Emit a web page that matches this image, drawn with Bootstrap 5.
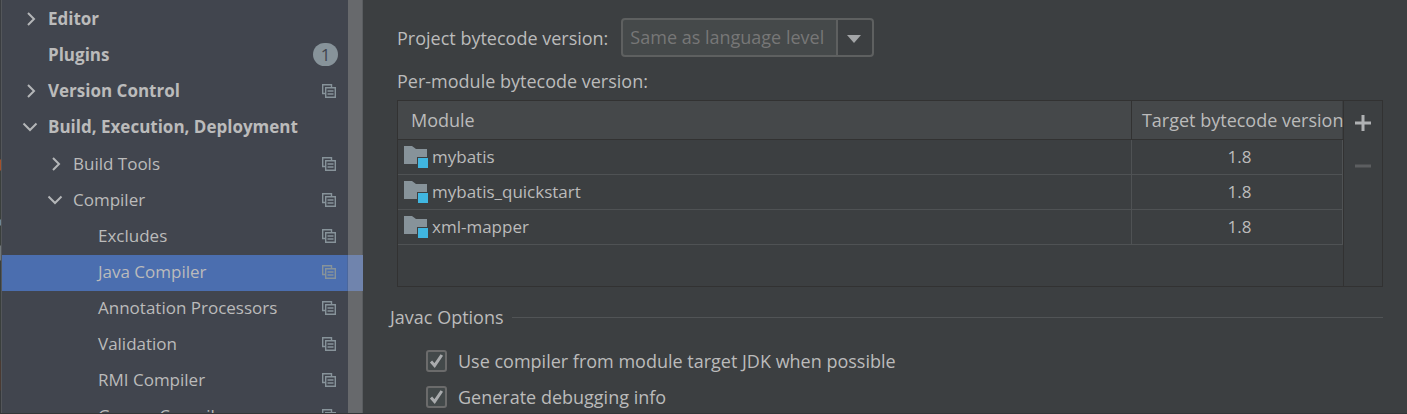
<!DOCTYPE html>
<html lang="en">
<head>
<meta charset="utf-8">
<meta name="viewport" content="width=device-width, initial-scale=1">
<title>Settings - Java Compiler</title>
<link href="https://cdn.jsdelivr.net/npm/bootstrap@5.3.0/dist/css/bootstrap.min.css" rel="stylesheet">
<style>
  :root { --pane: #3c3f41; --tree: #41454e; --ink: #bbbbbb; --edge: #323232; --grid: #4f5254; }
  body { background: var(--pane); color: var(--ink); font-family: "Open Sans", "Noto Sans", sans-serif; font-size: 18px; line-height: 24px; }
  .settings { border-bottom: 1px solid #333638; }

  /* category tree */
  .backdrop { width: 2px; border-right: 1px solid #53565a;
    background: linear-gradient(#3a3d40 0 159px, #a4502a 160px 170px, #3a3f3c 171px 219px, #6f8794 220px 225px, #3a3f3c 226px 245px, #70777b 246px 260px, #3a3f3c 261px 360px, #4a3a32 361px 390px, #36393b 391px); }
  .tree-pane { width: 363px; background: var(--tree); }
  .tree { padding-top: 3px; font-size: 17px; }
  .tree-row { height: 36px; padding: 0 12px 2px 22px; gap: 12px; color: var(--ink); text-decoration: none; white-space: nowrap; }
  .tree-row.fw-bold { padding-bottom: 5px; }
  .tree-row.level-2 { padding-left: 47px; }
  .tree-row.level-3 { padding-left: 96px; }
  .tree-row.selected { background: #4b6eaf; }
  .tree-row .chevron { width: 12px; height: 14px; fill: none; stroke: #b4b6b8; stroke-width: 2; overflow: visible; }
  .tree-row .scope { width: 14px; height: 14px; fill: none; stroke: #87939a; }
  .count-pill { width: 25px; height: 23px; margin-right: -2px; border-radius: 12px; background: #87939a; color: var(--tree); line-height: 23px; }
  .scroll-track { width: 15px; background: #67696c; border-right: 1px solid #5a5d60; }
  .scroll-over { left: 347px; right: 0; top: 255px; height: 36px; background: #7084ad; border-left: 1px solid #4a679d; }

  /* compiler page */
  .page { padding: 18px 24px 0 27px; }
  .indent { padding-left: 7px; }
  .combo-row { gap: 13px; }
  .combo { width: 253px; height: 39px; padding: 0 44px 2px 7px; border: 2px solid #5e6060; border-radius: 4px; color: #777777; line-height: 34px; opacity: 1;
    appearance: none; -webkit-appearance: none;
    background: url("data:image/svg+xml,%3Csvg xmlns='http://www.w3.org/2000/svg' width='36' height='35'%3E%3Cpath fill='%233c3f41' d='M0 0h36v35H0z'/%3E%3Cpath fill='%235e6060' d='M0 0h2v35H0z'/%3E%3Cpath fill='%23a3a5a7' d='M11 15h14l-7 8z'/%3E%3C/svg%3E") right center no-repeat #45494a; }
  .module-caption { padding: 12px 0 7px; }
  .module-box { height: 187px; border: 1px solid var(--edge); }
  .modules { table-layout: fixed; color: var(--ink); font-size: 17px; }
  .modules th { height: 38px; padding: 1px 0 0 13px; background: #45484a; border-bottom: 1px solid var(--edge); font-size: 18px; font-weight: 400; line-height: 24px; white-space: nowrap; }
  .modules th + th { padding-left: 10px; border-left: 1px solid var(--edge); }
  .modules td { height: 35px; padding: 0 0 0 5px; border-bottom: 1px solid var(--grid); vertical-align: middle; }
  .modules td + td { border-left: 1px solid var(--grid); border-right: 1px solid var(--grid); text-align: center; }
  .version-col { width: 211px; }
  .folder { width: 25px; height: 22px; }
  .tools { width: 39px; border-left: 1px solid var(--edge); padding-top: 8px; gap: 16px; }
  .tool { width: 28px; height: 27px; padding: 0; border: 0; background: none; color: #afb1b3; }
  .tool:disabled { color: #5c5e60; }
  .tool svg { display: block; margin: 0 auto; }
  .group-title { padding: 18px 0 14px; }
  .rule { height: 1px; background: #515456; }
  .option { height: 36px; padding-left: 36px; gap: 11px; }
  .tick { width: 21px; height: 22px; margin: 0; border: 2px solid #6b6b6b; border-radius: 3px; appearance: none; -webkit-appearance: none; background: #43494a; }
  .tick:checked { background: url("data:image/svg+xml,%3Csvg xmlns='http://www.w3.org/2000/svg' viewBox='0 0 17 18'%3E%3Cpath fill='none' stroke='%23a9abad' stroke-width='3' d='M3 9.5L6.6 13.5 13.8 3'/%3E%3C/svg%3E") center no-repeat #43494a; }
</style>
</head>
<body>
<svg class="d-none" aria-hidden="true">
  <symbol id="right" viewBox="0 0 12 14"><path d="M4 1L10 7l-6 6"/></symbol>
  <symbol id="down" viewBox="0 0 12 14" overflow="visible"><path d="M-.5 3.500L6 10l6.500-6.500"/></symbol>
  <symbol id="copy" viewBox="0 0 14 14"><path d="M3 9.500H.7V.7H9.500V3M3.700 3.700h9.600v9.600H3.700zM5.500 7h6M5.500 10h6" stroke-width="1.400"/></symbol>
  <symbol id="module" viewBox="0 0 25 22"><path fill="#87939a" d="M1 0h8l4 3h11v8h-10v7H1z"/><path fill="#40b6e0" d="M15 12h10v10H15z"/></symbol>
</svg>
<div class="settings d-flex vh-100 overflow-hidden">
  <aside class="tree-pane d-flex flex-shrink-0 position-relative">
    <div class="backdrop flex-shrink-0"></div>
    <nav class="tree flex-grow-1" aria-label="Settings">
      <a href="#" class="tree-row d-flex align-items-center fw-bold"><svg class="chevron"><use href="#right"/></svg><span class="flex-grow-1">Editor</span></a>
      <a href="#" class="tree-row d-flex align-items-center fw-bold"><svg class="chevron"></svg><span class="flex-grow-1">Plugins</span><span class="count-pill text-center fw-normal">1</span></a>
      <a href="#" class="tree-row d-flex align-items-center fw-bold"><svg class="chevron"><use href="#right"/></svg><span class="flex-grow-1">Version Control</span><svg class="scope"><use href="#copy"/></svg></a>
      <a href="#" class="tree-row d-flex align-items-center fw-bold"><svg class="chevron"><use href="#down"/></svg><span class="flex-grow-1">Build, Execution, Deployment</span></a>
      <a href="#" class="tree-row level-2 d-flex align-items-center"><svg class="chevron"><use href="#right"/></svg><span class="flex-grow-1">Build Tools</span><svg class="scope"><use href="#copy"/></svg></a>
      <a href="#" class="tree-row level-2 d-flex align-items-center"><svg class="chevron"><use href="#down"/></svg><span class="flex-grow-1">Compiler</span><svg class="scope"><use href="#copy"/></svg></a>
      <a href="#" class="tree-row level-3 d-flex align-items-center"><span class="flex-grow-1">Excludes</span><svg class="scope"><use href="#copy"/></svg></a>
      <a href="#" class="tree-row level-3 selected d-flex align-items-center" aria-current="page"><span class="flex-grow-1">Java Compiler</span><svg class="scope"><use href="#copy"/></svg></a>
      <a href="#" class="tree-row level-3 d-flex align-items-center"><span class="flex-grow-1">Annotation Processors</span><svg class="scope"><use href="#copy"/></svg></a>
      <a href="#" class="tree-row level-3 d-flex align-items-center"><span class="flex-grow-1">Validation</span><svg class="scope"><use href="#copy"/></svg></a>
      <a href="#" class="tree-row level-3 d-flex align-items-center"><span class="flex-grow-1">RMI Compiler</span><svg class="scope"><use href="#copy"/></svg></a>
      <a href="#" class="tree-row level-3 d-flex align-items-center"><span class="flex-grow-1">Groovy Compiler</span><svg class="scope"><use href="#copy"/></svg></a>
    </nav>
    <div class="scroll-track flex-shrink-0"></div>
    <div class="scroll-over position-absolute"></div>
  </aside>

  <main class="page flex-grow-1">
    <div class="indent">
      <div class="combo-row d-flex align-items-center">
        <label for="bytecode">Project bytecode version:</label>
        <select id="bytecode" class="combo" disabled><option>Same as language level</option></select>
      </div>
      <div class="module-caption" id="modules-label">Per-module bytecode version:</div>
      <div class="module-box d-flex">
        <div class="flex-grow-1 overflow-hidden">
          <table class="modules w-100" aria-labelledby="modules-label">
            <colgroup><col><col class="version-col"></colgroup>
            <thead><tr><th scope="col">Module</th><th scope="col">Target bytecode version</th></tr></thead>
            <tbody>
              <tr><td><span class="d-flex align-items-center gap-1"><svg class="folder"><use href="#module"/></svg>mybatis</span></td><td>1.8</td></tr>
              <tr><td><span class="d-flex align-items-center gap-1"><svg class="folder"><use href="#module"/></svg>mybatis_quickstart</span></td><td>1.8</td></tr>
              <tr><td><span class="d-flex align-items-center gap-1"><svg class="folder"><use href="#module"/></svg>xml-mapper</span></td><td>1.8</td></tr>
            </tbody>
          </table>
        </div>
        <div class="tools d-flex flex-column align-items-center flex-shrink-0">
          <button type="button" class="tool" aria-label="Add"><svg width="16" height="16"><path fill="currentColor" d="M6.500 0h3v6.500H16v3H9.500V16h-3V9.500H0v-3h6.500z"/></svg></button>
          <button type="button" class="tool" aria-label="Remove" disabled><svg width="16" height="16"><path fill="currentColor" d="M0 6.500h16v3H0z"/></svg></button>
        </div>
      </div>
    </div>
    <section>
      <div class="group-title d-flex align-items-center"><span class="me-2">Javac Options</span><span class="rule flex-grow-1"></span></div>
      <div class="option d-flex align-items-center"><input type="checkbox" class="tick" id="target-jdk" checked><label for="target-jdk">Use compiler from module target JDK when possible</label></div>
      <div class="option d-flex align-items-center"><input type="checkbox" class="tick" id="debug-info" checked><label for="debug-info">Generate debugging info</label></div>
    </section>
  </main>
</div>
<script src="https://cdn.jsdelivr.net/npm/bootstrap@5.3.0/dist/js/bootstrap.bundle.min.js"></script>
</body>
</html>
